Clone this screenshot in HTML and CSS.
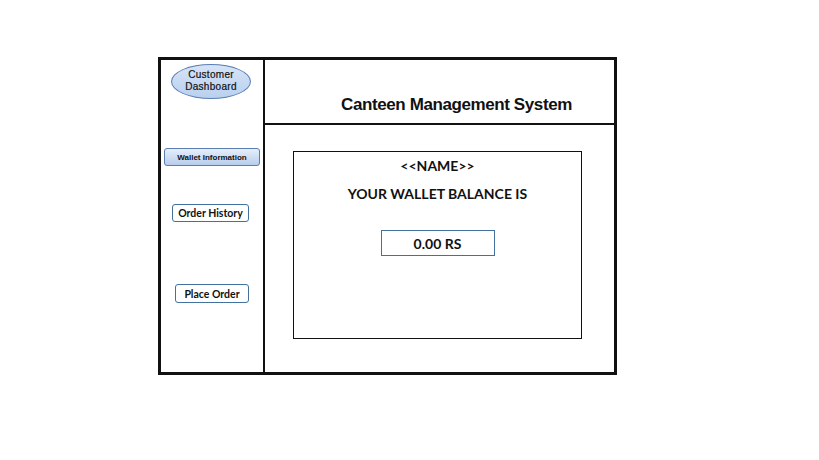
FILE: index.html
```html
<!DOCTYPE html>
<html>
<head>
<meta charset="utf-8">
<link rel="stylesheet" href="styles.css">
</head>
<body>
<div class="page">
  <div class="frame">
    <aside class="sidebar">
      <div class="oval">Customer<br>Dashboard</div>
      <div class="btn btn-active">Wallet Information</div>
      <div class="btn btn-history">Order History</div>
      <div class="btn btn-place">Place Order</div>
    </aside>
    <main class="main">
      <header class="header">
        <h1 class="title">Canteen Management System</h1>
      </header>
      <section class="content">
        <div class="card">
          <div class="name">&lt;&lt;NAME&gt;&gt;</div>
          <div class="label">YOUR WALLET BALANCE IS</div>
          <div class="balance">0.00 RS</div>
        </div>
      </section>
    </main>
  </div>
</div>
</body>
</html>
```
FILE: styles.css
```css
html, body {
  margin: 0;
  padding: 0;
  background: #fff;
}
.page {
  padding: 57px 0 0 158px;
}
.frame {
  box-sizing: border-box;
  width: 459px;
  height: 318px;
  border: 3px solid #111;
  display: flex;
}
.sidebar {
  width: 102px;
  border-right: 2px solid #111;
  display: flex;
  flex-direction: column;
  align-items: flex-start;
}
.oval {
  box-sizing: border-box;
  margin: 4px 0 0 10px;
  width: 80px;
  height: 35px;
  border-radius: 50%;
  border: 1px solid #5a7db2;
  background: linear-gradient(#d6e4f7, #b9d0ef);
  font-family: "Liberation Sans", Arial, sans-serif;
  font-size: 10px;
  line-height: 12px;
  text-align: center;
  padding-top: 4px;
  color: #111;
  letter-spacing: 0.3px;
  -webkit-text-stroke: 0.2px #111;
}
.btn {
  box-sizing: border-box;
  display: flex;
  align-items: center;
  justify-content: center;
  color: #111;
  border-radius: 3px;
}
.btn-active {
  margin: 49px 0 0 3px;
  width: 96px;
  height: 18px;
  border: 1px solid #5a7db2;
  background: linear-gradient(#e6eefa, #b8cdec);
  font-family: "Liberation Sans", Arial, sans-serif;
  font-size: 8px;
  font-weight: bold;
  letter-spacing: 0px;
}
.btn-history {
  margin: 38px 0 0 11px;
  width: 77px;
  height: 18px;
  border: 1px solid #41719c;
  background: #fff;
  font-family: "Lato", "Liberation Sans", sans-serif;
  font-size: 10.5px;
  font-weight: bold;
}
.btn-place {
  margin: 62px 0 0 14px;
  width: 74px;
  height: 19px;
  border: 1px solid #41719c;
  background: #fff;
  font-family: "Lato", "Liberation Sans", sans-serif;
  font-size: 10.5px;
  font-weight: bold;
}
.main {
  flex: 1;
  display: flex;
  flex-direction: column;
}
.header {
  box-sizing: border-box;
  height: 65px;
  border-bottom: 2px solid #111;
  display: flex;
  align-items: flex-end;
  justify-content: center;
  padding: 0 0 9px 34px;
}
.title {
  margin: 0;
  font-family: "Liberation Sans", Arial, sans-serif;
  font-size: 17px;
  font-weight: bold;
  letter-spacing: -0.4px;
  line-height: 19px;
  color: #111;
}
.content {
  flex: 1;
  padding: 26px 0 0 28px;
}
.card {
  box-sizing: border-box;
  width: 289px;
  height: 188px;
  border: 1px solid #111;
  display: flex;
  flex-direction: column;
  align-items: center;
  font-family: "Lato", "Liberation Sans", sans-serif;
  font-weight: bold;
  color: #111;
  font-size: 14px;
}
.name {
  margin-top: 5px;
  line-height: 17px;
}
.label {
  margin-top: 11px;
  line-height: 17px;
}
.balance {
  box-sizing: border-box;
  margin-top: 28px;
  width: 114px;
  height: 26px;
  border: 1px solid #41719c;
  display: flex;
  align-items: center;
  justify-content: center;
}
```
